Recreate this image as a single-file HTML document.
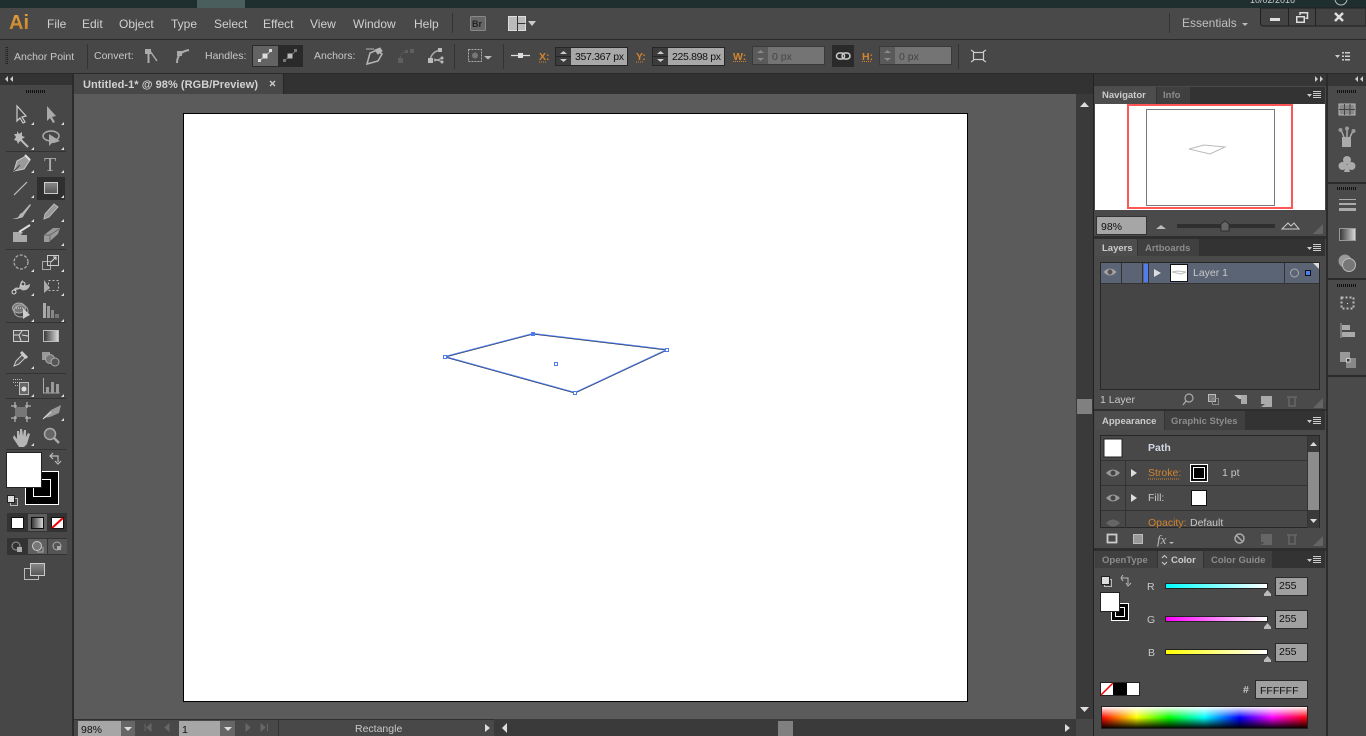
<!DOCTYPE html>
<html><head><meta charset="utf-8"><title>Illustrator</title>
<style>
html,body{margin:0;padding:0;background:#4a4a4a;overflow:hidden;width:1366px;height:736px}
svg{display:block;position:absolute;left:0;top:0}
text{font-family:"Liberation Sans",sans-serif;font-size:10.5px;fill:#d2d2d2}
.m{font-size:12px;fill:#d0d0d0}
.d{fill:#111}
.o{fill:#d2842e}
.g{fill:#8c8c8c}
.b{font-weight:bold}
.c{fill:#c8c8c8}
</style></head><body>
<svg width="1366" height="736" viewBox="0 0 1366 736" xmlns="http://www.w3.org/2000/svg">
<defs>
<linearGradient id="gr" x1="0" x2="1" y1="0" y2="0"><stop offset="0" stop-color="#333"/><stop offset="1" stop-color="#ddd"/></linearGradient>
<linearGradient id="gv" x1="0" x2="0" y1="0" y2="1"><stop offset="0" stop-color="#8a8a8a"/><stop offset="1" stop-color="#555"/></linearGradient>
<linearGradient id="ai" x1="0" x2="0" y1="0" y2="1"><stop offset="0" stop-color="#e5a03c"/><stop offset="1" stop-color="#c07f2c"/></linearGradient>
<linearGradient id="sc" x1="0" x2="1" y1="0" y2="0"><stop offset="0" stop-color="#00ffff"/><stop offset="1" stop-color="#fff"/></linearGradient>
<linearGradient id="sm" x1="0" x2="1" y1="0" y2="0"><stop offset="0" stop-color="#ff00ff"/><stop offset="1" stop-color="#fff"/></linearGradient>
<linearGradient id="sy" x1="0" x2="1" y1="0" y2="0"><stop offset="0" stop-color="#ffff00"/><stop offset="1" stop-color="#fff"/></linearGradient>
<linearGradient id="sp" x1="0" x2="1" y1="0" y2="0"><stop offset="0" stop-color="#f00"/><stop offset=".17" stop-color="#ff0"/><stop offset=".33" stop-color="#0f0"/><stop offset=".5" stop-color="#0ff"/><stop offset=".67" stop-color="#00f"/><stop offset=".83" stop-color="#f0f"/><stop offset="1" stop-color="#f00"/></linearGradient>
<linearGradient id="spv" x1="0" x2="0" y1="0" y2="1"><stop offset="0" stop-color="#fff"/><stop offset=".5" stop-color="#fff" stop-opacity="0"/><stop offset=".5" stop-color="#000" stop-opacity="0"/><stop offset="1" stop-color="#000"/></linearGradient>
</defs>

<!-- base -->
<rect width="1366" height="736" fill="#4a4a4a"/>
<rect width="1366" height="8" fill="#1f2f2f"/>
<rect x="197" width="48" height="8" fill="#4a5e5e"/>
<rect y="8" width="1366" height="31" fill="#494949"/>
<rect y="39" width="1366" height="1" fill="#2a2a2a"/>
<rect y="40" width="1366" height="33" fill="#474747"/>
<rect y="73" width="1366" height="1" fill="#2a2a2a"/>

<!-- canvas -->
<rect x="74" y="74" width="1020" height="20" fill="#323232"/>
<rect x="74" y="94" width="1002" height="625" fill="#5b5b5b"/>
<rect x="74" y="74" width="209" height="20" fill="#474747"/>
<rect x="283" y="74" width="1" height="20" fill="#262626"/>
<text x="83" y="88" style="font-size:11px" class="b" textLength="175">Untitled-1* @ 98% (RGB/Preview)</text>
<path d="M270 81l5 5m0-5l-5 5" stroke="#ccc" stroke-width="1.4"/>
<rect x="183.500" y="113.500" width="784" height="588" fill="#fff" stroke="#000"/>

<!-- shape -->
<path d="M445 357L533 334L667 350L575 393Z" fill="#fff" stroke="#222" stroke-width="1"/>
<path d="M445 356.500L533 333.500L667 349.500L575 392.500Z" fill="none" stroke="#4f7df0" stroke-width="1"/>
<g fill="#fff" stroke="#4f7df0">
<rect x="443.500" y="355.500" width="3" height="3"/><rect x="665.500" y="348.500" width="3" height="3"/><rect x="573.500" y="391.500" width="3" height="3"/><rect x="554.500" y="362.500" width="3" height="3"/>
</g>
<rect x="531" y="332" width="4" height="4" fill="#4f7df0"/>

<!-- menu bar -->
<text x="9" y="29" style="font-size:20px;font-weight:bold;fill:url(#ai)">Ai</text>
<text class="m" x="47" y="28">File</text><text class="m" x="82" y="28">Edit</text><text class="m" x="119" y="28">Object</text><text class="m" x="171" y="28">Type</text><text class="m" x="214" y="28">Select</text><text class="m" x="263" y="28">Effect</text><text class="m" x="310" y="28">View</text><text class="m" x="353" y="28">Window</text><text class="m" x="414" y="28">Help</text>
<rect x="452" y="13" width="1" height="20" fill="#333"/>
<rect x="470.500" y="16.500" width="15" height="14" rx="1" fill="#666" stroke="#888"/>
<text x="472" y="27" style="font-size:9px;font-weight:bold;fill:#222">Br</text>
<rect x="508.500" y="16.500" width="17" height="14" fill="#bbb" stroke="#ddd"/>
<path d="M517.500 16v15M517.500 23.500h8" stroke="#333"/>
<path d="M528 21h8l-4 5z" fill="#ccc"/>
<rect x="1169" y="13" width="1" height="20" fill="#333"/>
<text x="1182" y="27" style="font-size:12px;fill:#c0c0c0">Essentials</text>
<path d="M1242 23h6l-3 3z" fill="#bbb"/>
<!-- window buttons -->
<path d="M1260.500 8v15q0 3 3 3H1366V8z" fill="#434343" stroke="#1f1f1f"/>
<path d="M1288.500 8v18M1315.500 8v18" stroke="#222"/>
<rect x="1270" y="18" width="10" height="3" fill="#ddd"/>
<rect x="1296.750" y="16.750" width="7.500" height="5.500" fill="none" stroke="#ddd" stroke-width="1.500"/><path d="M1300 15v-2.250h7.500v5.500h-2" fill="none" stroke="#ddd" stroke-width="1.500"/>
<path d="M1335 13l8 8m0-8l-8 8" stroke="#ddd" stroke-width="2.500"/>
<text x="1250" y="3" style="font-size:9px;fill:#ccc">10/02/2016</text>
<circle cx="1341" cy="-1" r="6" fill="none" stroke="#bbb"/>

<!-- control bar -->
<path d="M6 47v17M7.500 47v17" stroke="#1c1c1c" stroke-dasharray="1 1" stroke-width="1"/>
<text x="14" y="60" class="c">Anchor Point</text>
<rect x="87" y="44" width="1" height="25" fill="#333"/>
<text x="94" y="59" class="c">Convert:</text>
<path d="M150 51l7 10" stroke="#aaa" stroke-width="1.500"/><path d="M148.500 51v12" stroke="#aaa" stroke-width="2"/><rect x="145" y="49" width="6" height="5" fill="#aaa"/>
<path d="M177 63q0-11 12-13" fill="none" stroke="#aaa" stroke-width="2"/><rect x="177" y="51" width="5" height="5" fill="#aaa"/>
<text x="205" y="59" class="c">Handles:</text>
<rect x="252" y="45" width="51" height="22" fill="#2a2a2a"/>
<rect x="253" y="46" width="25" height="20" fill="#636363"/>
<path d="M259 61l12-10" stroke="#bbb"/><rect x="262.500" y="53.500" width="5" height="5" fill="#ddd"/><rect x="258" y="59" width="3" height="3" fill="#ddd"/><rect x="269" y="49" width="3" height="3" fill="#ddd"/>
<path d="M284 61l12-10" stroke="#666"/><rect x="287.500" y="53.500" width="5" height="5" fill="#bbb"/><rect x="283" y="59" width="3" height="3" fill="#777"/><rect x="294" y="49" width="3" height="3" fill="#777"/>
<text x="314" y="59" class="c">Anchors:</text>
<path d="M367 64l3-11 7-3 5 4-4 7z" fill="none" stroke="#b5b5b5" stroke-width="1.500"/><path d="M366 49h8M375 50l5-2 2 3-4 3z" stroke="#b5b5b5" fill="#b5b5b5"/>
<g fill="#5f5f5f"><rect x="398" y="58" width="5" height="5"/><rect x="405" y="50" width="3" height="3"/><rect x="410" y="49" width="4" height="4"/></g><path d="M400 58q1-5 6-7" fill="none" stroke="#5f5f5f" stroke-dasharray="2 1"/>
<path d="M430 60q2-9 11-10" fill="none" stroke="#aaa" stroke-width="1.500"/><rect x="428" y="58" width="5" height="5" fill="#bbb"/><rect x="438" y="48" width="4" height="4" fill="#bbb"/><path d="M434 59l9 3m0-4l-9 3" stroke="#bbb"/><circle cx="442" cy="58" r="1.500" fill="#bbb"/><circle cx="442" cy="62" r="1.500" fill="#bbb"/>
<rect x="454" y="44" width="1" height="25" fill="#333"/>
<rect x="468.500" y="49.500" width="13" height="12" fill="none" stroke="#aaa" stroke-dasharray="2 1"/><circle cx="475" cy="55.500" r="3" fill="#777"/>
<path d="M484 56h8l-4 3.500z" fill="#bbb"/>
<rect x="503" y="44" width="1" height="25" fill="#333"/>
<path d="M511 55.500h19" stroke="#ddd" stroke-width="1.200"/><rect x="518" y="53" width="5" height="5" fill="#ddd"/>
<text x="539" y="60" class="o b">X:</text><path d="M539 62h8" stroke="#d2842e" stroke-dasharray="1 1"/>
<rect x="555.500" y="47.500" width="72" height="18" fill="#3c3c3c" stroke="#262626"/>
<rect x="571" y="48" width="56" height="17" fill="#a8a8a8"/>
<path d="M560 54h7l-3.500-3zM560 59h7l-3.500 3z" fill="#ccc"/><path d="M556 56.500h15" stroke="#262626"/>
<text x="575" y="60" class="d" textLength="49">357.367 px</text>
<text x="636" y="60" class="o b">Y:</text><path d="M636 62h8" stroke="#d2842e" stroke-dasharray="1 1"/>
<rect x="652.500" y="47.500" width="72" height="18" fill="#3c3c3c" stroke="#262626"/>
<rect x="668" y="48" width="56" height="17" fill="#a8a8a8"/>
<path d="M657 54h7l-3.500-3zM657 59h7l-3.500 3z" fill="#ccc"/><path d="M653 56.500h15" stroke="#262626"/>
<text x="672" y="60" class="d" textLength="49">225.898 px</text>
<text x="733" y="60" class="o b">W:</text><path d="M733 61.500h13" stroke="#d2842e" stroke-dasharray="1 1"/>
<rect x="752.500" y="46.500" width="72" height="18" fill="#5a5a5a" stroke="#3a3a3a"/>
<rect x="768" y="47" width="56" height="17" fill="#747474"/>
<path d="M757 53h7l-3.500-3zM757 58h7l-3.500 3z" fill="#888"/>
<text x="772" y="60" style="fill:#444">0 px</text>
<rect x="832" y="45" width="22" height="22" fill="#2a2a2a"/>
<rect x="836.500" y="53" width="8" height="6" rx="3" fill="none" stroke="#ccc" stroke-width="1.500"/><rect x="842" y="53" width="8" height="6" rx="3" fill="none" stroke="#ccc" stroke-width="1.500"/>
<text x="862" y="60" class="o b">H:</text><path d="M862 61.500h10" stroke="#d2842e" stroke-dasharray="1 1"/>
<rect x="879.500" y="46.500" width="72" height="18" fill="#5a5a5a" stroke="#3a3a3a"/>
<rect x="895" y="47" width="56" height="17" fill="#747474"/>
<path d="M884 53h7l-3.500-3zM884 58h7l-3.500 3z" fill="#888"/>
<text x="899" y="60" style="fill:#444">0 px</text>
<rect x="958" y="44" width="1" height="25" fill="#333"/>
<rect x="973.500" y="52.500" width="10" height="7" fill="none" stroke="#ccc" stroke-width="1.200"/>
<path d="M971 50l3 2m12-2l-3 2m-12 10l3-2m12 2l-3-2" stroke="#ccc" stroke-width="1.200"/>
<g fill="#ccc"><path d="M1335 55h5l-2.500 3z"/><rect x="1342" y="52" width="2" height="1.500"/><rect x="1345" y="52" width="5" height="1.500"/><rect x="1342" y="55.500" width="2" height="1.500"/><rect x="1345" y="55.500" width="5" height="1.500"/><rect x="1342" y="59" width="2" height="1.500"/><rect x="1345" y="59" width="5" height="1.500"/></g>

<!-- left toolbar -->
<rect x="0" y="74" width="72" height="662" fill="#474747"/>
<rect x="72" y="74" width="2" height="662" fill="#2b2b2b"/>
<rect x="0" y="74" width="72" height="11" fill="#333"/>
<path d="M5 79l3-3v6zM10 79l3-3v6z" fill="#ccc"/>
<path d="M26 91.500h19" stroke="#111" stroke-width="3" stroke-dasharray="1 1"/>
<rect x="37" y="177" width="28" height="23" fill="#2f2f2f"/>
<g fill="#333"><rect x="6" y="151" width="60" height="1"/><rect x="6" y="249" width="60" height="1"/><rect x="6" y="322" width="60" height="1"/><rect x="6" y="373" width="60" height="1"/><rect x="6" y="398" width="60" height="1"/><rect x="6" y="449" width="60" height="1"/></g>
<!-- row 1 -->
<path d="M17 106v15l3-3 3 5 2-1-3-5 4-1z" fill="#444" stroke="#ccc" stroke-width="1.200"/>
<path d="M47 106v15l3-3 3 5 2-1-3-5 4-1z" fill="#aaa"/>
<!-- row 2 -->
<path d="M17 131l2 3 3-2 0 4 3 1-3 2 1 3-3-1-2 3-1-3-3-1 2-3-2-3 3 0z" fill="#bbb"/><path d="M21 140l7 7" stroke="#bbb" stroke-width="2"/>
<ellipse cx="51" cy="136" rx="8" ry="5" fill="none" stroke="#aaa" stroke-width="1.500"/><path d="M49 134v12l3-3 2 0 6-2z" fill="#aaa"/>
<!-- row 3 -->
<path d="M14 171l3-10 9-5 4 4-6 9z" fill="#9a9a9a" stroke="#ccc"/><path d="M14 171l6-6" stroke="#444"/><path d="M25 155l5 5" stroke="#ddd" stroke-width="2"/>
<text x="44" y="171" style="font-family:'Liberation Serif',serif;font-size:20px;fill:#aaa">T</text>
<!-- row 4 -->
<path d="M14 195l13-13" stroke="#c0c0c0" stroke-width="1.200"/>
<rect x="44.500" y="182.500" width="13" height="11" fill="url(#gv)" stroke="#ccc"/>
<!-- row 5 -->
<path d="M12 218q5 1 7-2 1-3 3-3l8-9 1 1-7 10q-1 3-4 3-4 2-8 0z" fill="#b5b5b5"/>
<path d="M44 219l1-5 9-10 4 3-9 10z" fill="#999" stroke="#bbb"/>
<!-- row 6 -->
<path d="M13 232h10l-2 3 6 0v7H13z" fill="#aaa"/><path d="M19 232l11-7" stroke="#ddd" stroke-width="2"/>
<path d="M44 235l9-7h7l-2 6-9 8h-5z" fill="#999"/><path d="M44 235h6l9-6M50 235v6" stroke="#666" fill="none"/>
<!-- row 7 -->
<circle cx="21" cy="262" r="7" fill="none" stroke="#aaa" stroke-width="1.300" stroke-dasharray="3 1.500"/>
<rect x="42.500" y="261.500" width="8" height="8" fill="none" stroke="#aaa"/><rect x="47.500" y="255.500" width="11" height="10" fill="none" stroke="#ccc"/><path d="M51 262l5-5m-3 0h3v3" stroke="#ddd" fill="none"/>
<!-- row 8 -->
<path d="M13 292q1-6 6-4 2-8 4-8-2 4 1 5 2 1 6-1 0 4-4 6-5 1-5-1-4 0-8 3z" fill="#bbb"/><circle cx="14" cy="292" r="2" fill="#444" stroke="#ddd"/><circle cx="23" cy="284" r="2" fill="#444" stroke="#ddd"/>
<path d="M44 280v13l6-5z" fill="#aaa"/><rect x="48.500" y="280.500" width="10" height="10" fill="none" stroke="#bbb" stroke-dasharray="2 2"/>
<!-- row 9 -->
<ellipse cx="19" cy="308" rx="6.500" ry="5" fill="#777" stroke="#aaa"/><ellipse cx="21" cy="311" rx="7" ry="6" fill="none" stroke="#aaa"/><path d="M16 308h8" stroke="#ddd" stroke-dasharray="1 1"/><path d="M23 308v11l3-2 4-2z" fill="#ccc"/>
<g fill="#aaa"><rect x="43" y="303" width="3" height="15"/><rect x="47" y="306" width="3" height="12" fill="#999"/><rect x="51" y="310" width="3" height="8" fill="#888"/><rect x="55" y="314" width="4" height="4" fill="#777"/></g>
<!-- row 10 -->
<rect x="13.500" y="330.500" width="15" height="11" fill="#555" stroke="#ccc"/><path d="M14 335l5 0 3-4m-3 4l2 6m1-6l6 1" stroke="#ddd" fill="none"/>
<rect x="43.500" y="330.500" width="15" height="11" fill="url(#gr)" stroke="#bbb"/>
<!-- row 11 -->
<path d="M14 366l2-5 6-6 3 3-6 6z" fill="#555" stroke="#ccc"/><path d="M21 352l6 6" stroke="#ccc" stroke-width="3"/>
<rect x="42" y="352" width="8" height="8" fill="#999"/><circle cx="50" cy="359" r="4.500" fill="#777" stroke="#aaa"/><circle cx="55" cy="362" r="4" fill="#555" stroke="#aaa"/>
<!-- row 12 -->
<path d="M13 379.500h9m-9 3h7m-5 3h3" stroke="#bbb" stroke-dasharray="1 1"/><rect x="19.500" y="382.500" width="9" height="12" fill="#666" stroke="#bbb"/><circle cx="24" cy="389" r="2.500" fill="#ddd"/>
<path d="M43.500 378v15h16" fill="none" stroke="#aaa"/><rect x="46" y="387" width="3" height="6" fill="#999"/><rect x="51" y="382" width="3" height="11" fill="#999"/><rect x="56" y="384" width="3" height="9" fill="#999"/>
<!-- row 13 -->
<rect x="15" y="407" width="12" height="10" fill="#777"/><path d="M11 406h20M11 418h20M15 402v20M27 402v20" stroke="#ccc" stroke-dasharray="6 8"/>
<path d="M43 418l8-8 10-5-2 8-9 4z" fill="#999"/><path d="M43 419l8-7" stroke="#ddd"/>
<!-- row 14 -->
<path d="M14 435l3 4 0-8 2 0 1 5 0-7h2l1 7 1-6h2l0 7 2-4 2 1-3 10-3 3h-5l-6-9z" fill="#b5b5b5"/>
<circle cx="50" cy="434" r="5.500" fill="#666" stroke="#aaa" stroke-width="1.500"/><path d="M54 438l5 5" stroke="#aaa" stroke-width="2.500"/>
<!-- corner tri -->
<g fill="#ddd">
<path d="M34 122l-3 3h3zM64 122l-3 3h3zM34 147l-3 3h3zM64 147l-3 3h3zM34 170l-3 3h3zM64 170l-3 3h3zM34 195l-3 3h3zM64 195l-3 3h3zM34 219l-3 3h3zM64 219l-3 3h3zM64 243l-3 3h3zM34 269l-3 3h3zM64 269l-3 3h3zM34 293l-3 3h3zM64 293l-3 3h3zM34 319l-3 3h3zM64 319l-3 3h3zM34 366l-3 3h3zM34 394l-3 3h3zM64 394l-3 3h3zM64 418l-3 3h3zM34 443l-3 3h3z"/>
</g>
<!-- fill/stroke -->
<rect x="25.500" y="471.500" width="33" height="33" fill="#000" stroke="#fff"/>
<rect x="33.500" y="479.500" width="17" height="17" fill="#000" stroke="#fff"/>
<rect x="6.500" y="452.500" width="35" height="35" fill="#fff" stroke="#222"/>
<path d="M51 456h7l0 6m-3-1l3 3 3-3M53 453l-3 3 3 3" fill="none" stroke="#bbb" stroke-width="1.200"/>
<rect x="10.500" y="498.500" width="7" height="7" fill="none" stroke="#bbb"/><rect x="7.500" y="495.500" width="7" height="7" fill="#ddd" stroke="#222"/>
<!-- modes -->
<rect x="7" y="513" width="60" height="19" fill="#333"/>
<rect x="28" y="514" width="19" height="17" fill="#5f5f5f"/>
<rect x="11.500" y="517.500" width="12" height="11" fill="#fff" stroke="#111"/>
<rect x="31.500" y="517.500" width="12" height="11" fill="url(#gr)" stroke="#111"/>
<rect x="51.500" y="517.500" width="12" height="11" fill="#fff" stroke="#111"/><path d="M52 528l11-10" stroke="#e00" stroke-width="2"/>
<rect x="7" y="538" width="60" height="17" fill="#333"/>
<rect x="28" y="539" width="19" height="15" fill="#5f5f5f"/><rect x="48" y="539" width="19" height="15" fill="#555"/>
<circle cx="16" cy="546" r="4" fill="none" stroke="#999"/><rect x="17" y="547" width="5" height="5" fill="#aaa"/>
<circle cx="37" cy="546" r="4.500" fill="#777" stroke="#ccc"/><path d="M37 552h6v-5" stroke="#aaa" fill="none"/>
<circle cx="57" cy="546" r="4" fill="none" stroke="#aaa"/><rect x="57" y="546" width="4" height="4" fill="#aaa"/>
<!-- screen mode -->
<rect x="24.500" y="568.500" width="14" height="11" fill="#484848" stroke="#bbb"/>
<rect x="30.500" y="563.500" width="14" height="12" fill="url(#gv)" stroke="#ccc"/>

<!-- v scrollbar -->
<rect x="1076" y="94" width="18" height="625" fill="#3a3a3a"/>
<path d="M1080 107h9l-4.500-5z" fill="#ddd"/>
<path d="M1080 707h9l-4.500 5z" fill="#ddd"/>
<rect x="1077" y="399" width="15" height="15" fill="#808080"/>

<!-- status bar -->
<rect x="74" y="719" width="1002" height="17" fill="#484848"/>
<rect x="74" y="719" width="1020" height="1" fill="#2f2f2f"/>
<rect x="78" y="721" width="43" height="15" fill="#a6a6a6"/><text x="81" y="733" class="d">98%</text>
<rect x="121" y="721" width="14" height="15" fill="#666"/><path d="M124 727h8l-4 4z" fill="#ddd"/>
<path d="M145 724v7M147 727.500l4-3.500v7zM165 727.500l4-3.500v7z" fill="#666" stroke="#666"/>
<rect x="179" y="721" width="41" height="15" fill="#a6a6a6"/><text x="182" y="733" class="d">1</text>
<rect x="220" y="721" width="15" height="15" fill="#666"/><path d="M224 727h8l-4 4z" fill="#ddd"/>
<path d="M246 724l4 3.500-4 3.500zM261 724l4 3.500-4 3.500zM267.500 724v7" fill="#666" stroke="#666"/>
<rect x="278" y="720" width="1" height="16" fill="#333"/>
<text x="355" y="732" class="c">Rectangle</text>
<path d="M485 724l5 4-5 4z" fill="#ddd"/>
<rect x="494" y="719" width="582" height="17" fill="#3a3a3a"/>
<path d="M507 723l-5 5 5 5z" fill="#ddd"/>
<rect x="778" y="721" width="15" height="15" fill="#808080"/>
<path d="M1065 724l5 4-5 4z" fill="#ddd"/>
<rect x="1076" y="719" width="18" height="17" fill="#474747"/>

<!-- right panels -->
<rect x="1094" y="74" width="232" height="662" fill="#4a4a4a"/>
<rect x="1093" y="74" width="1" height="662" fill="#222"/>
<rect x="1094" y="74" width="232" height="12" fill="#363636"/>
<path d="M1315 76l3 3-3 3zM1320 76l3 3-3 3z" fill="#ccc"/>
<rect x="1326" y="74" width="2" height="662" fill="#2b2b2b"/>
<rect x="1328" y="74" width="38" height="12" fill="#363636"/>
<path d="M1355 79l3-3v6zM1360 79l3-3v6z" fill="#ccc"/>

<!-- navigator -->
<rect x="1095" y="87" width="230" height="17" fill="#333"/>
<rect x="1095" y="87" width="61" height="17" fill="#4d4d4d"/>
<rect x="1157" y="87" width="33" height="17" fill="#404040"/>
<text x="1102" y="98" class="b" style="font-size:9.500px;fill:#ccc">Navigator</text>
<text x="1163" y="98" class="g b" style="font-size:9.500px">Info</text>
<g fill="#ccc"><path d="M1307 94h5l-2.500 3z"/><rect x="1313" y="91" width="8" height="1"/><rect x="1313" y="93" width="8" height="1"/><rect x="1313" y="95" width="8" height="1"/><rect x="1313" y="97" width="8" height="1"/></g>
<rect x="1095" y="104" width="230" height="106" fill="#fff"/>
<rect x="1146.500" y="109.500" width="128" height="96" fill="#fff" stroke="#7a7a7a"/>
<path d="M1189 149L1204 145L1225 147L1210 154Z" fill="none" stroke="#bbb"/>
<rect x="1128" y="105" width="164" height="103" fill="none" stroke="#ff5555" stroke-width="2"/>
<rect x="1096.500" y="216.500" width="50" height="18" fill="#a6a6a6" stroke="#333"/>
<text x="1101" y="230" class="d">98%</text>
<path d="M1156 229l5-4 5 4z" fill="#bbb"/>
<rect x="1177" y="224" width="98" height="4" fill="#2f2f2f"/>
<path d="M1221 224l4-3 4 3v7h-8z" fill="#666" stroke="#2f2f2f"/>
<path d="M1282 229l6-6 3 3 3-3 5 6z" fill="none" stroke="#ccc"/>
<path d="M1323 224v10h-10z" fill="#777" opacity=".6"/>
<rect x="1094" y="236" width="232" height="3" fill="#2e2e2e"/>

<!-- layers -->
<rect x="1095" y="239" width="230" height="17" fill="#333"/>
<rect x="1095" y="239" width="42" height="17" fill="#4d4d4d"/>
<rect x="1138" y="239" width="61" height="17" fill="#404040"/>
<text x="1102" y="251" class="b" style="font-size:9.500px;fill:#ccc">Layers</text>
<text x="1145" y="251" class="g b" style="font-size:9.500px">Artboards</text>
<g fill="#ccc"><path d="M1307 247h5l-2.500 3z"/><rect x="1313" y="244" width="8" height="1"/><rect x="1313" y="246" width="8" height="1"/><rect x="1313" y="248" width="8" height="1"/><rect x="1313" y="250" width="8" height="1"/></g>
<rect x="1100.500" y="262.500" width="219" height="127" fill="#454545" stroke="#272727"/>
<rect x="1101" y="263" width="218" height="20" fill="#5a6474"/>
<path d="M1101 283.500h218M1121.500 263v20M1142.500 263v20M1148.500 263v20M1284.500 263v20" stroke="#333"/>
<rect x="1144" y="264" width="4" height="18" fill="#4f7df0"/>
<path d="M1104 272q6-6 12 0q-6 6-12 0z" fill="#aaa" stroke="#999"/><circle cx="1110" cy="272" r="2.500" fill="#555"/>
<path d="M1154 269l7 4-7 4z" fill="#ddd"/>
<rect x="1170.500" y="264.500" width="17" height="17" fill="#fff" stroke="#111"/>
<path d="M1172 272l6-1 8 1-5 2z" fill="none" stroke="#bbb"/>
<text x="1193" y="276" class="c">Layer 1</text>
<circle cx="1294.500" cy="273" r="4" fill="none" stroke="#aaa"/>
<rect x="1305.500" y="270.500" width="5" height="5" fill="#4f7df0" stroke="#111"/>
<path d="M1313 263h6v6z" fill="#ddd"/>
<text x="1100" y="403" class="c">1 Layer</text>
<circle cx="1189" cy="398" r="4" fill="none" stroke="#aaa" stroke-width="1.200"/><path d="M1186 401l-3 4" stroke="#aaa" stroke-width="1.300"/>
<rect x="1208.500" y="394.500" width="7" height="7" fill="#777" stroke="#bbb"/><rect x="1212.500" y="398.500" width="6" height="6" fill="none" stroke="#888"/>
<path d="M1234 395l5 4h7v-4zM1234 395l5 1" fill="#bbb"/><rect x="1241" y="395" width="6" height="9" fill="#aaa"/>
<path d="M1261 396h11v11h-11l4-3h-4z" fill="#aaa"/>
<path d="M1287 397h10M1289 397v9h6v-9" stroke="#666" fill="none" stroke-width="1.500"/>
<path d="M1323 398v10h-10z" fill="#777" opacity=".6"/>
<rect x="1094" y="409" width="232" height="2" fill="#2e2e2e"/>

<!-- appearance -->
<rect x="1095" y="411" width="230" height="19" fill="#333"/>
<rect x="1095" y="411" width="69" height="19" fill="#4d4d4d"/>
<rect x="1165" y="411" width="80" height="19" fill="#404040"/>
<text x="1102" y="424" class="b" style="font-size:9.500px;fill:#ccc">Appearance</text>
<text x="1171" y="424" class="g b" style="font-size:9.500px">Graphic Styles</text>
<g fill="#ccc"><path d="M1307 420h5l-2.500 3z"/><rect x="1313" y="417" width="8" height="1"/><rect x="1313" y="419" width="8" height="1"/><rect x="1313" y="421" width="8" height="1"/><rect x="1313" y="423" width="8" height="1"/></g>
<rect x="1100.500" y="435.500" width="219" height="92" fill="#484848" stroke="#272727"/>
<path d="M1101 460.500h206M1101 485.500h206M1101 510.500h206M1125.500 461v67M1307.500 436v92" stroke="#333"/>
<rect x="1308" y="436" width="11" height="92" fill="#3a3a3a"/>
<rect x="1308" y="452" width="11" height="58" fill="#8c8c8c"/>
<path d="M1310 446h7l-3.500-4zM1310 519h7l-3.500 4z" fill="#ddd"/>
<rect x="1104" y="439" width="18" height="18" fill="#fff" stroke="#222"/>
<text x="1148" y="451" class="b" style="fill:#cfd8e4">Path</text>
<path d="M1106 473q7-7 14 0q-7 7-14 0z" fill="#999"/><circle cx="1113" cy="473" r="2.500" fill="#444"/>
<path d="M1106 498q7-7 14 0q-7 7-14 0z" fill="#999"/><circle cx="1113" cy="498" r="2.500" fill="#444"/>
<path d="M1106 523q7-7 14 0q-7 7-14 0z" fill="#666"/>
<path d="M1131 469l6 4-6 4zM1131 494l6 4-6 4z" fill="#ddd"/>
<text x="1148" y="476" class="o">Stroke:</text><path d="M1148 479h31" stroke="#d2842e" stroke-dasharray="1 1"/>
<rect x="1191" y="465" width="16" height="16" fill="#000" stroke="#fff" stroke-width="2"/>
<rect x="1191.500" y="465.500" width="15" height="15" fill="none" stroke="#111"/>
<rect x="1193.500" y="467.500" width="11" height="11" fill="none" stroke="#fff"/>
<text x="1222" y="476" class="c">1 pt</text>
<text x="1148" y="501" class="c">Fill:</text>
<rect x="1191.500" y="490.500" width="15" height="15" fill="#fff" stroke="#111"/>
<text x="1148" y="526" class="o">Opacity:</text>
<text x="1190" y="526" class="c">Default</text>
<rect x="1107.500" y="534.500" width="9" height="8" fill="none" stroke="#ccc" stroke-width="1.800"/>
<rect x="1133.500" y="534.500" width="9" height="9" fill="#999" stroke="#bbb"/>
<text x="1157" y="544" style="font-family:'Liberation Serif',serif;font-style:italic;font-size:13px;fill:#bbb">fx</text><path d="M1169 542h5l-2.500 2z" fill="#bbb"/>
<circle cx="1239.500" cy="538.500" r="4.500" fill="none" stroke="#aaa" stroke-width="1.500"/><path d="M1236 535l7 7" stroke="#aaa" stroke-width="1.500"/>
<path d="M1261 534h11v11h-11l4-3h-4z" fill="#666"/>
<path d="M1287 535h10M1289 535v9h6v-9" stroke="#666" fill="none" stroke-width="1.500"/>
<path d="M1323 536v10h-10z" fill="#777" opacity=".6"/>
<rect x="1094" y="548" width="232" height="3" fill="#2e2e2e"/>

<!-- color -->
<rect x="1095" y="551" width="230" height="17" fill="#333"/>
<rect x="1095" y="551" width="62" height="17" fill="#404040"/>
<rect x="1158" y="551" width="45" height="17" fill="#4d4d4d"/>
<rect x="1204" y="551" width="68" height="17" fill="#404040"/>
<text x="1102" y="563" class="g b" style="font-size:9.500px">OpenType</text>
<path d="M1162 558l2.500-2.500 2.500 2.500M1162 562l2.500 2.500 2.500-2.500" fill="none" stroke="#ccc"/>
<text x="1171" y="563" class="b" style="font-size:9.500px;fill:#ccc">Color</text>
<text x="1211" y="563" class="g b" style="font-size:9.500px">Color Guide</text>
<g fill="#ccc"><path d="M1307 559h5l-2.500 3z"/><rect x="1313" y="556" width="8" height="1"/><rect x="1313" y="558" width="8" height="1"/><rect x="1313" y="560" width="8" height="1"/><rect x="1313" y="562" width="8" height="1"/></g>
<rect x="1104.500" y="579.500" width="7" height="7" fill="none" stroke="#bbb"/><rect x="1101.500" y="576.500" width="8" height="8" fill="#ddd" stroke="#222"/>
<path d="M1122 578h6v6m-2-1l2 3 3-3M1123 575l-2 3 2 3" fill="none" stroke="#bbb" stroke-width="1"/>
<rect x="1111.500" y="603.500" width="17" height="17" fill="#000" stroke="#fff"/>
<rect x="1115.500" y="607.500" width="9" height="9" fill="#000" stroke="#fff"/>
<rect x="1100.500" y="592.500" width="19" height="19" fill="#fff" stroke="#222"/>
<text x="1147" y="590" class="c">R</text><text x="1147" y="623" class="c">G</text><text x="1148" y="656" class="c">B</text>
<rect x="1165.500" y="583.500" width="102" height="5" fill="url(#sc)" stroke="#222"/>
<rect x="1165.500" y="616.500" width="102" height="5" fill="url(#sm)" stroke="#222"/>
<rect x="1165.500" y="649.500" width="102" height="5" fill="url(#sy)" stroke="#222"/>
<path d="M1264 594l3.500-4 3.500 4v2h-7zM1264 627l3.500-4 3.500 4v2h-7zM1264 660l3.500-4 3.500 4v2h-7z" fill="#bbb"/>
<g fill="#a0a0a0" stroke="#2b2b2b"><rect x="1275.500" y="577.500" width="32" height="18"/><rect x="1275.500" y="610.500" width="32" height="18"/><rect x="1275.500" y="643.500" width="32" height="18"/><rect x="1255.500" y="680.500" width="52" height="18"/></g>
<text x="1279" y="589" class="d">255</text><text x="1279" y="622" class="d">255</text><text x="1279" y="655" class="d">255</text>
<text x="1243" y="693" class="c b">#</text>
<text x="1260" y="694" class="d">FFFFFF</text>
<rect x="1100.500" y="682.500" width="39" height="13" fill="#fff" stroke="#222"/>
<path d="M1101 695l12-12" stroke="#e00" stroke-width="1.500"/>
<rect x="1113" y="683" width="14" height="12" fill="#000"/>
<rect x="1101.500" y="706.500" width="206" height="22" fill="url(#sp)"/>
<rect x="1101.500" y="706.500" width="206" height="22" fill="url(#spv)" stroke="#222"/>

<!-- dock -->
<rect x="1328" y="86" width="38" height="650" fill="#4a4a4a"/>
<g fill="#2b2b2b"><rect x="1328" y="182" width="38" height="2"/><rect x="1328" y="278" width="38" height="2"/><rect x="1328" y="375" width="38" height="2"/></g>
<path d="M1337 91.500h19M1337 188.500h19M1337 285.500h19" stroke="#111" stroke-width="3" stroke-dasharray="1 1"/>
<rect x="1339" y="104" width="16" height="11" fill="#888" stroke="#bbb"/><path d="M1344.500 104v11M1350 104v11M1339 109.500h16" stroke="#444"/>
<path d="M1342 137h9v10h-9z" fill="#aaa"/><path d="M1344 137l-3-7M1347 137v-8M1350 137l3-6" stroke="#aaa" stroke-width="1.500"/><circle cx="1340.500" cy="130" r="2" fill="#999"/><circle cx="1347" cy="128.500" r="2" fill="#999"/><circle cx="1353.500" cy="131" r="2" fill="#999"/>
<circle cx="1347" cy="160" r="4" fill="#aaa"/><circle cx="1342.500" cy="166" r="4" fill="#aaa"/><circle cx="1351.500" cy="166" r="4" fill="#aaa"/><path d="M1347 163l-3 9h6z" fill="#aaa"/>
<g fill="#aaa"><rect x="1339" y="199" width="17" height="1"/><rect x="1339" y="203" width="17" height="2"/><rect x="1339" y="208" width="17" height="3"/></g>
<rect x="1339.500" y="228.500" width="16" height="12" fill="url(#gr)" stroke="#999"/>
<circle cx="1345" cy="261" r="6.500" fill="#999"/><circle cx="1349" cy="265" r="6.500" fill="#777" stroke="#bbb"/>
<rect x="1341.500" y="297.500" width="12" height="11" fill="none" stroke="#bbb" stroke-dasharray="2 2" stroke-width="2"/>
<rect x="1347" y="303" width="1" height="1" fill="#ddd"/>
<path d="M1341 323v15" stroke="#aaa"/><rect x="1342" y="325" width="8" height="5" fill="#aaa"/><rect x="1342" y="332" width="13" height="5" fill="#aaa"/>
<rect x="1340" y="352" width="10" height="10" fill="#999"/><rect x="1346" y="358" width="10" height="10" fill="#888"/><rect x="1346.500" y="358.500" width="3.500" height="3.500" fill="#333" stroke="#ccc"/>
</svg>
</body></html>
